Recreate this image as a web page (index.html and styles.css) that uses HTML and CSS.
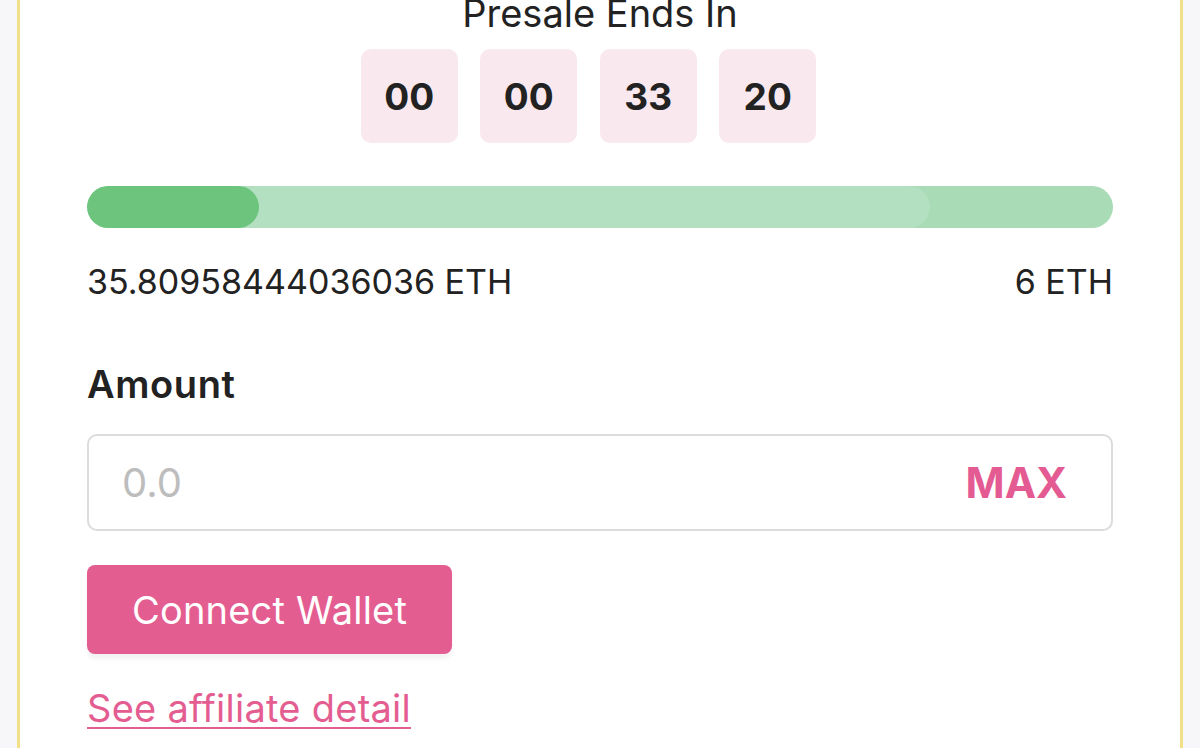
FILE: index.html
```html
<!DOCTYPE html>
<html>
<head>
    <meta charset="UTF-8">
    <title>Presale</title>
    <link rel="stylesheet" href="styles.css">
</head>
<body>
    <div class="card">
        <h2 class="title">Presale Ends In</h2>

        <div class="countdown">
            <div class="unit">00</div>
            <div class="unit">00</div>
            <div class="unit">33</div>
            <div class="unit">20</div>
        </div>

        <div class="progress">
            <div class="progress-buffer"></div>
            <div class="progress-fill" style="width: 16.8%;"></div>
        </div>

        <div class="raised">
            <span>35.80958444036036 ETH</span>
            <span>6 ETH</span>
        </div>

        <label class="amount-label" for="amount">Amount</label>
        <div class="amount-box">
            <input type="text" id="amount" placeholder="0.0">
            <button class="max">MAX</button>
        </div>

        <button class="connect">Connect Wallet</button>

        <a class="affiliate" href="#">See affiliate detail</a>
    </div>
</body>
</html>
```

FILE: styles.css
```css
body {
    font-family: Inter, "Noto Sans", sans-serif;
    margin: 0;
    background-color: #f7f7f9;
    color: #222;
    overflow: hidden;
}
.card {
    margin: 0 17px;
    background-color: #fff;
    border-left: 3px solid #f3df85;
    border-right: 3px solid #f3df85;
    padding: 0 67px 40px;
    height: 760px;
    box-sizing: border-box;
}
.title {
    margin: -9px 0 0;
    font-size: 38px;
    line-height: 44px;
    font-weight: 400;
    text-align: center;
    color: #222;
}
.countdown {
    display: flex;
    justify-content: center;
    gap: 22.5px;
    margin-top: 14px;
    padding-right: 23px;
}
.unit {
    width: 97px;
    height: 94px;
    border-radius: 10px;
    background-color: #f9e8ee;
    display: flex;
    align-items: center;
    justify-content: center;
    font-size: 37px;
    font-weight: 700;
    color: #222;
}
.progress {
    position: relative;
    height: 42px;
    margin-top: 43px;
    border-radius: 21px;
    background-color: #a9dbb6;
    overflow: hidden;
}
.progress-buffer, .progress-fill {
    position: absolute;
    top: 0;
    left: 0;
    bottom: 0;
    border-radius: 21px;
}
.progress-buffer {
    width: 82.2%;
    background-color: #b2e0c0;
}
.progress-fill {
    background-color: #6cc47d;
}
.raised {
    display: flex;
    justify-content: space-between;
    margin-top: 34px;
    font-size: 34px;
    line-height: 40px;
}
.amount-label {
    display: block;
    margin-top: 62px;
    font-size: 38px;
    line-height: 40px;
    font-weight: 600;
    letter-spacing: 0.6px;
}
.amount-box {
    display: flex;
    align-items: center;
    margin-top: 30px;
    height: 97px;
    border: 2px solid #dcdcdc;
    border-radius: 10px;
    box-sizing: border-box;
    padding: 0 44px 0 33px;
}
.amount-box input {
    flex: 1;
    border: none;
    outline: none;
    font-family: inherit;
    font-size: 40px;
    color: #222;
    padding: 0;
    background: transparent;
}
.amount-box input::placeholder {
    color: #bdbdbd;
}
.max {
    border: none;
    background: none;
    padding: 0;
    font-family: inherit;
    font-size: 42px;
    font-weight: 700;
    color: #e45b93;
    cursor: pointer;
}
.connect {
    display: block;
    margin-top: 34px;
    width: 365px;
    height: 89px;
    border: none;
    border-radius: 8px;
    background-color: #e45d91;
    color: #fff;
    font-family: inherit;
    font-size: 38px;
    letter-spacing: 0.2px;
    box-shadow: 0 5px 4px rgba(0, 0, 0, 0.05);
    cursor: pointer;
}
.affiliate {
    display: inline-block;
    margin-top: 32px;
    font-size: 38px;
    line-height: 44px;
    letter-spacing: 0.25px;
    color: #e45d91;
    text-decoration: underline;
    text-underline-offset: 5px;
    text-decoration-thickness: 2px;
}
```
